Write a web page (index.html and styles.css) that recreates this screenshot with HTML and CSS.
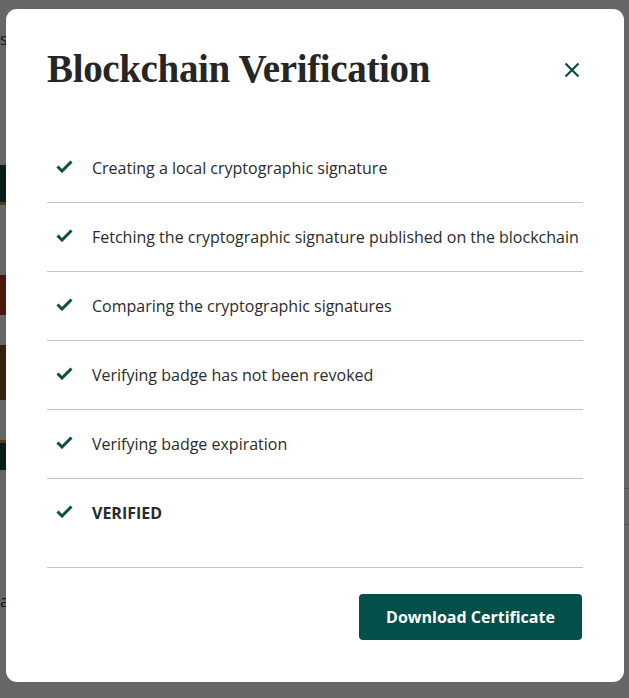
FILE: index.html
```html
<!DOCTYPE html>
<html lang="en">
<head>
<meta charset="utf-8">
<title>Blockchain Verification</title>
<link rel="stylesheet" href="styles.css">
</head>
<body>
<div class="page">
  <div class="page-side">
    <div class="deco deco-green"></div>
    <div class="deco deco-red"></div>
    <div class="deco deco-brown"></div>
    <div class="deco deco-green2"></div>
  </div>
  <div class="page-main">
    <p class="bg-text bg-s">s</p>
    <p class="bg-text bg-a">a</p>
  </div>
  <div class="page-right">
    <p class="bg-text">n</p>
    <p class="bg-text">s</p>
    <p class="bg-text">l</p>
    <p class="bg-text">:</p>
    <p class="bg-text">c</p>
    <div class="bg-rule"></div>
    <p class="bg-link">e</p>
    <div class="bg-rule"></div>
  </div>
</div>
<div class="overlay"></div>
<div class="modal" role="dialog" aria-labelledby="modal-title">
  <div class="modal-header">
    <h1 id="modal-title" class="modal-title">Blockchain Verification</h1>
    <button class="close-btn" aria-label="Close">
      <svg width="16" height="16" viewBox="0 0 16 16"><path d="M1.5 1.5 L14.5 14.5 M14.5 1.5 L1.5 14.5" stroke="#0b4f46" stroke-width="2.2" fill="none"/></svg>
    </button>
  </div>
  <ul class="steps">
    <li class="step"><svg class="check" width="17" height="13" viewBox="0 0 17 13"><path d="M1.5 6.5 L6 11 L15.5 1.5" stroke="#0b4f46" stroke-width="3" fill="none"/></svg><span>Creating a local cryptographic signature</span></li>
    <li class="step"><svg class="check" width="17" height="13" viewBox="0 0 17 13"><path d="M1.5 6.5 L6 11 L15.5 1.5" stroke="#0b4f46" stroke-width="3" fill="none"/></svg><span>Fetching the cryptographic signature published on the blockchain</span></li>
    <li class="step"><svg class="check" width="17" height="13" viewBox="0 0 17 13"><path d="M1.5 6.5 L6 11 L15.5 1.5" stroke="#0b4f46" stroke-width="3" fill="none"/></svg><span>Comparing the cryptographic signatures</span></li>
    <li class="step"><svg class="check" width="17" height="13" viewBox="0 0 17 13"><path d="M1.5 6.5 L6 11 L15.5 1.5" stroke="#0b4f46" stroke-width="3" fill="none"/></svg><span>Verifying badge has not been revoked</span></li>
    <li class="step"><svg class="check" width="17" height="13" viewBox="0 0 17 13"><path d="M1.5 6.5 L6 11 L15.5 1.5" stroke="#0b4f46" stroke-width="3" fill="none"/></svg><span>Verifying badge expiration</span></li>
    <li class="step step-final"><svg class="check" width="17" height="13" viewBox="0 0 17 13"><path d="M1.5 6.5 L6 11 L15.5 1.5" stroke="#0b4f46" stroke-width="3" fill="none"/></svg><span class="verified">VERIFIED</span></li>
  </ul>
  <div class="modal-footer">
    <button class="download-btn">Download Certificate</button>
  </div>
</div>
</body>
</html>
```

FILE: styles.css
```css
* { box-sizing: border-box; }
html, body { margin: 0; padding: 0; }
body {
  width: 629px;
  height: 698px;
  overflow: hidden;
  font-family: "Open Sans", "Liberation Sans", sans-serif;
  background: #ffffff;
  position: relative;
}
.page {
  display: flex;
  height: 698px;
}
.page-side {
  width: 40px;
  padding-top: 165px;
  display: flex;
  flex-direction: column;
}
.deco { width: 40px; }
.deco-green { height: 40px; background: #0f4a40; border-bottom: 3px solid #c79a3a; margin-bottom: 70px; }
.deco-red { height: 40px; background: #b8401e; margin-bottom: 30px; }
.deco-brown { height: 55px; background: #7a5a2a; margin-bottom: 40px; }
.deco-green2 { height: 30px; background: #0f4a40; border-top: 3px solid #c79a3a; }
.page-main { flex: 1; position: relative; }
.bg-text { margin: 0; font-size: 16px; color: #333; }
.bg-s { position: absolute; left: -40px; top: 28px; }
.bg-a { position: absolute; left: -40px; top: 590px; }
.page-right {
  width: 40px;
  padding-top: 228px;
  padding-left: 12px;
}
.page-right .bg-text { line-height: 30px; }
.bg-rule { height: 1px; background: #ccc; margin: 110px 0 8px -12px; }
.page-right .bg-rule + .bg-link + .bg-rule { margin: 8px 0 0 -12px; }
.bg-link { margin: 0; color: #0b4f46; font-size: 14px; }

.overlay {
  position: fixed;
  inset: 0;
  background: rgba(0, 0, 0, 0.6);
}
.modal {
  position: absolute;
  left: 6px;
  top: 9px;
  width: 618px;
  height: 673px;
  background: #ffffff;
  border-radius: 11px;
  padding: 0 41px;
  display: flex;
  flex-direction: column;
}
.modal-header {
  height: 125px;
  display: flex;
  align-items: center;
  justify-content: space-between;
  padding-bottom: 4px;
}
.modal-title {
  margin: 0;
  font-family: "Liberation Serif", "Times New Roman", serif;
  font-weight: 700;
  font-size: 39px;
  letter-spacing: -0.35px;
  color: #262626;
  line-height: 1.2;
}
.close-btn {
  border: 0;
  background: transparent;
  padding: 0;
  width: 16px;
  height: 16px;
  margin-right: 3px;
  display: flex;
  cursor: pointer;
}
.steps {
  list-style: none;
  margin: 0;
  padding: 0 0 20px;
  border-bottom: 1px solid #c4c4c4;
}
.step {
  display: flex;
  align-items: center;
  height: 69px;
  border-bottom: 1px solid #c4c4c4;
  font-size: 16px;
  line-height: 24px;
  color: #2b2b2b;
}
.step-final { border-bottom: 0; height: 68px; }
.check {
  margin-left: 9px;
  margin-right: 19px;
  flex: none;
  position: relative;
  top: -2px;
}
.verified { font-weight: 700; }
.modal-footer {
  display: flex;
  justify-content: flex-end;
  padding-top: 26px;
  padding-right: 1px;
}
.download-btn {
  height: 46px;
  width: 223px;
  border: 0;
  border-radius: 4px;
  background: #03504a;
  color: #ffffff;
  font-family: "Open Sans", "Liberation Sans", sans-serif;
  font-weight: 700;
  font-size: 16px;
  cursor: pointer;
}
```
